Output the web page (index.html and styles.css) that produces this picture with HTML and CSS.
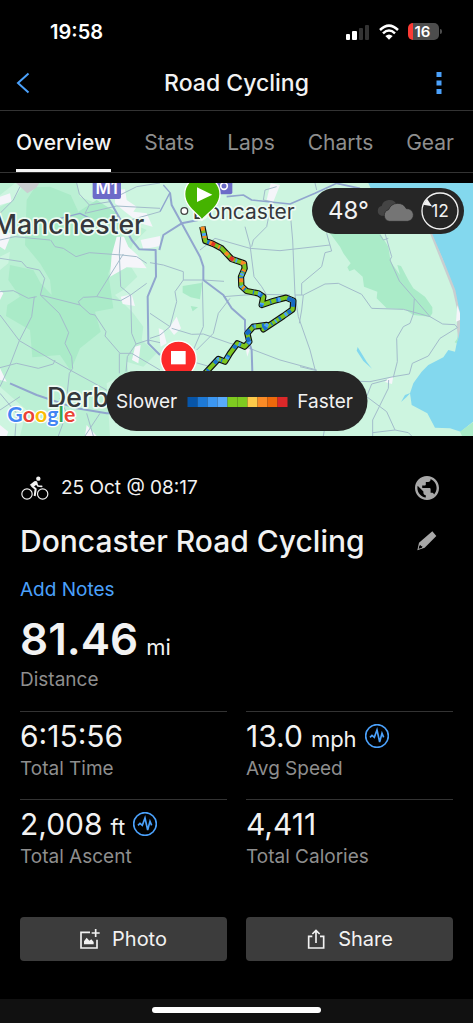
FILE: index.html
```html
<!DOCTYPE html>
<html lang="en">
<head>
<meta charset="utf-8">
<meta name="viewport" content="width=device-width, initial-scale=1">
<title>Road Cycling</title>
<link rel="stylesheet" href="styles.css">
</head>
<body>
<div class="app">
  <div class="status">
    <span class="clock">19:58</span>
    <div class="status-icons">
      <svg width="24" height="16" viewBox="0 0 24 16" aria-hidden="true">
        <rect x="0" y="10" width="4" height="6" rx="1" fill="#fff"/>
        <rect x="6" y="7" width="5" height="9" rx="1" fill="#fff"/>
        <rect x="13" y="4" width="4" height="12" rx="1" fill="#333"/>
        <rect x="19" y="1" width="4" height="15" rx="1" fill="#333"/>
      </svg>
      <svg width="20" height="16" viewBox="0 0 60 48" aria-hidden="true">
        <g fill="none" stroke="#fff" stroke-width="7.5">
          <path d="M3 18Q30 -8 57 18"/>
          <path d="M12 28Q30 11 48 28"/>
        </g>
        <path d="M19 36Q30 27 41 36L30 47Z" fill="#fff"/>
      </svg>
      <div class="battery"><span>16</span></div>
    </div>
  </div>

  <header class="nav">
    <button class="icon-button" aria-label="Back">
      <svg width="14" height="22" viewBox="0 0 14 22"><path d="M12.500 1.500 2 11l10.500 9.500" fill="none" stroke="#4ba1fb" stroke-width="2"/></svg>
    </button>
    <h1>Road Cycling</h1>
    <button class="icon-button more" aria-label="More">
      <svg width="6" height="24" viewBox="0 0 6 24" fill="#4ba1fb"><path d="M.5 1h5v5h-5zM.5 9.500h5v5h-5zM.5 18h5v5h-5z"/></svg>
    </button>
  </header>

  <nav class="tabs">
    <a href="#overview" class="active">Overview</a>
    <a href="#stats">Stats</a>
    <a href="#laps">Laps</a>
    <a href="#charts">Charts</a>
    <a href="#gear">Gear</a>
  </nav>

  <section class="map">
    <svg class="map-canvas" viewBox="0 9 1419 759" preserveAspectRatio="xMidYMid slice" role="img" aria-label="Route map">
      <rect y="9" width="1419" height="759" fill="#cdf5e0"/>
      <path fill="#bbf0d4" d="M0 9H230L240 50 300 75 350 110 440 150 400 190 380 240 412 290 370 330 345 345 400 400 430 440 425 480 470 520 430 560 380 545 385 575 320 610 330 768H0Z"/>
      <path fill="#aaebc8" d="M80 60 105 22 150 20 212 45 235 95 290 60 352 100 362 180 325 280 340 385 285 395 302 455 240 505 212 572 180 525 97 532 90 450 18 408 22 375 60 350 25 300 30 255 100 270 122 310 155 345 150 300 120 250 75 195Z"/>
      <path fill="#cdf5e0" d="M0 45 45 10H75L40 60 0 80ZM0 230 30 215 25 250 0 270ZM0 620 80 690 60 768H0Z"/>
      <g fill="#f5f5fa">
        <path d="M0 50 30 40 35 65 0 75ZM0 150 35 160 15 210 0 200ZM0 330 10 340 0 360ZM0 565 20 605 0 600ZM0 735 25 755 20 768H0Z"/>
        <path d="M345 30 375 28 380 60 410 80 400 95 440 100 458 140 420 130 375 95 345 70ZM350 170H372L385 200 412 225 440 265 380 262 330 290 335 225ZM422 180 480 168V198L430 208ZM362 350 395 343 405 378 368 372ZM405 500 422 495 415 550 396 540ZM260 735 290 768H255Z"/>
        <path d="M507 445 530 410 543 445 522 465ZM476 445 490 450 500 490 482 500ZM812 10 840 15 820 65 800 60ZM736 500 750 505 742 530ZM455 650 500 640 520 665ZM1162 598 1180 588 1176 612 1155 606Z"/>
      </g>
      <path fill="#c9ced0" d="M48 9H118L108 24 82 40Z"/>
      <path fill="#aaebc8" d="M548 318 607 308 600 358 572 352 548 338ZM572 378 594 382 578 394ZM990 160H1140L1165 200 1172 245 1200 285 1192 255 1203 258 1225 300 1240 325 1275 350 1297 382V400L1290 410 1240 405 1215 388 1160 385 1130 355 1132 335 1092 320 1088 290 1063 268 1048 274 1042 262 1052 250 1030 220 1020 200Z"/>
      <path fill="#83d8ee" d="M1105 9H1419V725L1382 755 1350 745 1305 743 1282 700 1235 675 1230 640 1240 610 1265 575 1285 555 1330 532 1345 510 1365 515 1372 480 1380 400 1360 325 1325 230 1290 155 1112 25ZM1073 501 1100 545 1116 566 1090 543 1070 512ZM1203 666 1215 645 1231 639 1219 652Z"/>
      <path fill="#c9ced0" d="M1288 155H1294L1330 240 1366 330 1380 400V450L1375 478 1370 440 1374 400 1358 330Z"/>
      <path fill="#f5f5fa" d="M1372 375 1380 400V420L1368 425Z"/>
      <path fill="#aaebc8" d="M1380 755 1419 727V768H1386ZM1364 487 1376 470 1370 490Z"/>
      <g fill="none" stroke="#a3bccb" stroke-width="3" stroke-linejoin="round">
        <path d="M0 235 65 245 80 262 118 270 134 295 121 345 240 375 270 402 285 405 318 455 315 468 360 520H395L480 570M0 335 40 332 85 355 110 350M121 345 178 400 206 458 195 490 215 530 218 565 208 580 200 655M103 350 95 410 58 482 28 560 0 620M0 405 58 482 165 545 210 570 320 630M0 563 50 550 115 565 160 552 165 540M370 222 290 350 250 352 235 365 240 375M290 350 362 362 392 345 440 310M392 345 395 460 408 492 382 530 378 575M408 492 445 480 480 488M358 520V580M152 180 165 200 190 205 228 230 268 218 365 225 410 230 440 250M362 170 358 220 362 320 392 345M0 180 45 170 150 180M230 9 238 42 268 75 255 100 350 78 480 85M268 75 330 65M355 130 480 95M480 9 410 20 360 45M0 100 40 60 60 20M0 640 50 700 45 768M180 655 200 700 175 768M260 700 280 768M300 700 255 768M60 650 0 690"/>
        <path d="M450 248 490 255 550 275 550 300H610L672 304M550 300 525 335 530 365 510 440 480 465 450 475M607 304 610 440 580 510M510 440 450 400M515 445 575 463 610 462 690 490 735 500 840 540 950 570M670 350 735 345 790 343 870 345M690 355 655 400 640 460 590 510M735 140 750 195 762 290 785 320 800 345M600 210 645 175 750 205 840 212 990 195M870 90 878 180 885 345 895 410 930 510 945 568M815 65 790 60 795 30 830 20M815 65 800 140 760 180 755 200M885 345 910 345 975 312 1015 310 1085 343 1115 385 1210 388 1290 410 1328 432 1365 434 1372 443M910 345 905 390 898 430M905 310 965 260 975 218 995 213 980 160M905 310V345M1140 165 1150 180 1165 175M1155 160 1175 230 1170 240 1198 303 1243 355 1290 410M1243 355 1240 402 1230 430 1210 440 1190 475 1192 545 1180 592M1372 443 1320 475 1285 528 1237 550 1228 582 1180 590 1110 605 1050 603M1166 600 1165 625 1118 720V768M1100 650 1160 695 1185 750 1225 758 1235 768M1185 750 1118 758M1100 650 1115 612 1160 600M945 9 950 30M900 560 950 572M970 768 975 740M535 575 560 540 630 560"/>
      </g>
      <g fill="none" stroke="#91a6ce" stroke-linejoin="round">
        <path stroke-width="6" d="M325 55 365 125 395 180 418 208 467 210 468 290 443 350 445 490 480 525M30 610 110 645 230 685 320 700 350 700M510 38 515 75 545 130 600 230 610 260V300L670 345 695 385 735 420V450L755 510 757 575M478 210 490 165 545 130 595 120"/>
        <path stroke-width="5" d="M680 50 730 45 755 60 870 72 945 40 1010 10M1010 10 1080 25"/>
        <path stroke-width="4" d="M180 115 240 100 270 115M480 95 510 38 490 15"/>
      </g>
      <rect x="278" y="-10" width="85" height="67" rx="6" fill="#6c6bc8"/>
      <text class="road-label" x="320" y="42" text-anchor="middle">M1</text>
      <rect x="640" y="-20" width="57" height="63" rx="6" fill="#6c6bc8"/>
      <circle cx="672" cy="18" r="10" fill="none" stroke="#fff" stroke-width="5"/>
      <text class="place" x="-22" y="163">Manchester</text>
      <text class="place" x="141" y="680">Derby</text>
      <text class="place small" x="578" y="116">Doncaster</text>
      <circle cx="553" cy="93" r="10" fill="#fff" stroke="#444" stroke-width="4"/>
      <g class="route" transform="translate(450 0)">
        <path class="route-edge" d="M157 140 166 183 190 192 215 205 245 237 282 250 284 265 273 290 274 318 290 333 325 340 340 350 335 375 370 363 408 353 430 362 428 388 400 408 340 448 350 435 310 440 292 460 298 485 284 500 262 490 240 520 225 545 205 537 165 580"/>
        <path class="route-green" d="M157 140 166 183 190 192 215 205 245 237 282 250 284 265 273 290 274 318 290 333 325 340 340 350 335 375 370 363 408 353 430 362 428 388 400 408 340 448 350 435 310 440 292 460 298 485 284 500 262 490 240 520 225 545 205 537 165 580"/>
        <path class="route-blue" d="M157 140 166 183 190 192 215 205 245 237 282 250 284 265 273 290 274 318 290 333 325 340 340 350 335 375 370 363 408 353 430 362 428 388 400 408 340 448 350 435 310 440 292 460 298 485 284 500 262 490 240 520 225 545 205 537 165 580"/>
        <path class="route-sky" d="M157 140 166 183 190 192 215 205 245 237 282 250 284 265 273 290 274 318 290 333 325 340 340 350 335 375 370 363 408 353 430 362 428 388 400 408 340 448 350 435 310 440 292 460 298 485 284 500 262 490 240 520 225 545 205 537 165 580"/>
        <path stroke="#f98a22" stroke-dasharray="12 17 6 22" d="M157 140 166 183 190 192 215 205 245 237 282 250 284 265 273 290 274 318 290 333"/>
        <path stroke="#e33327" d="M185 190 195 195M240 232 250 240"/>
        <path stroke="#1769c5" d="M412 354 430 362 429 380M288 462 300 450M292 472 298 485"/>
      </g>
      <path fill="#45b300" stroke="#fff" stroke-width="4" d="M606 120C598 103 554 83 554 42A53 53 0 0 1 660 42C660 83 616 103 606 120Z"/>
      <path fill="#fff" d="M591 22 637 44 591 66Z"/>
      <path fill="#fd2929" stroke="#fff" stroke-width="4" d="M535 620C525 600 482 575 482 537A53 53 0 0 1 589 537C589 575 545 600 535 620Z"/>
      <rect x="513" y="513" width="44" height="40" fill="#fff"/>
      <text class="google" x="22" y="727"><tspan fill="#4285f4">G</tspan><tspan fill="#ea4335">o</tspan><tspan fill="#fbbc05">o</tspan><tspan fill="#4285f4">g</tspan><tspan fill="#34a853">l</tspan><tspan fill="#ea4335">e</tspan></text>
    </svg>
    <div class="weather">
      <span>48°</span>
      <svg width="38" height="22" viewBox="0 0 114 66" aria-hidden="true">
        <path fill="#444" d="M16 47A15 15 0 0 1 17 18 24 24 0 0 1 61 12L40 48Z"/>
        <path fill="#757575" stroke="#262626" stroke-width="2" d="M40 64A18 18 0 0 1 38 29 29 29 0 0 1 91 26 19 19 0 0 1 95 64Z"/>
      </svg>
      <svg class="wind" width="38" height="38" viewBox="0 0 114 114" aria-label="Wind 12">
        <circle cx="57" cy="57" r="54" fill="none" stroke="#f2f2f2" stroke-width="4"/>
        <path fill="#f2f2f2" d="M18 20 33 43 7 38Z"/>
        <text x="57" y="76">12</text>
      </svg>
    </div>
    <div class="legend">
      <span>Slower</span>
      <div class="scale"><i class="c1"></i><i class="c2"></i><i class="c3"></i><i class="c4"></i><i class="c5"></i><i class="c5"></i><i class="c6"></i><i class="c7"></i><i class="c8"></i><i class="c9"></i></div>
      <span>Faster</span>
    </div>
  </section>

  <main class="details">
    <div class="row date-row">
      <svg width="28" height="24" viewBox="64 44 84 72" aria-hidden="true">
        <g fill="none" stroke="#f2f2f2">
          <circle cx="82" cy="98" r="15.500" stroke-width="3.500"/>
          <circle cx="129" cy="98" r="15.500" stroke-width="3.500"/>
          <path stroke-width="6" stroke-linejoin="round" d="M96 73 108 83 105 104"/>
          <path stroke-width="5" stroke-linejoin="round" stroke-linecap="round" d="M109 66 115 74 126 75"/>
        </g>
        <path fill="#f2f2f2" d="M90 71 104 60Q110 57 113 62L114 67 101 77Z"/>
        <circle cx="116" cy="52" r="6.500" fill="#f2f2f2"/>
      </svg>
      <span class="date">25 Oct @ 08:17</span>
      <button class="icon-button end" aria-label="Privacy">
        <svg width="24" height="24" viewBox="2 2 20 20" fill="#a8a8a8"><path d="M12 2C6.480 2 2 6.480 2 12s4.480 10 10 10 10-4.480 10-10S17.520 2 12 2zm-1 17.930c-3.950-.49-7-3.850-7-7.930 0-.62.08-1.210.21-1.790L9 15v1c0 1.100.9 2 2 2v1.930zm6.900-2.540c-.26-.81-1-1.390-1.900-1.390h-1v-3c0-.55-.45-1-1-1H8v-2h2c.55 0 1-.45 1-1V7h2c1.100 0 2-.9 2-2v-.41c2.930 1.190 5 4.060 5 7.410 0 2.080-.8 3.970-2.100 5.390z"/></svg>
      </button>
    </div>
    <div class="row title-row">
      <h2>Doncaster Road Cycling</h2>
      <button class="icon-button end" aria-label="Edit">
        <svg width="24" height="24" viewBox="540 206 72 72"><path fill="#a8a8a8" fill-rule="evenodd" d="M547 270 552 247 592 213 604 227 569 262ZM553 256 551 265 561 262 562 257 558 258 557 254Z"/></svg>
      </button>
    </div>
    <a href="#notes" class="notes">Add Notes</a>

    <div class="distance">
      <div class="value big">81.46 <small>mi</small></div>
      <div class="label">Distance</div>
    </div>
    <div class="stats">
      <div class="stat"><div class="value">6:15:56</div><div class="label">Total Time</div></div>
      <div class="stat">
        <div class="value">13.0 <small>mph</small>
          <svg class="pulse" viewBox="0 0 72 72" aria-hidden="true"><circle cx="36" cy="36" r="34"/><path d="M15 40 21 34 28 40 36 18 44 54 51 28 56 40"/></svg>
        </div>
        <div class="label">Avg Speed</div>
      </div>
      <div class="stat">
        <div class="value">2,008 <small>ft</small>
          <svg class="pulse" viewBox="0 0 72 72" aria-hidden="true"><circle cx="36" cy="36" r="34"/><path d="M15 40 21 34 28 40 36 18 44 54 51 28 56 40"/></svg>
        </div>
        <div class="label">Total Ascent</div>
      </div>
      <div class="stat"><div class="value">4,411</div><div class="label">Total Calories</div></div>
    </div>
    <div class="actions">
      <button>
        <svg width="20" height="20" viewBox="0 0 60 60"><path d="M30 10H3V57H51V32M35 12H59M47 0V24" fill="none" stroke="#f2f2f2" stroke-width="5"/><path fill="#f2f2f2" d="M12 46V37L20 26 28 35 34 31 41 39V46Z"/></svg>
        Photo
      </button>
      <button>
        <svg width="20" height="20" viewBox="0 0 60 60"><path d="M19 22H8V57H53V22H42M30 42V5M19 15 30 4 41 15" fill="none" stroke="#f2f2f2" stroke-width="5"/></svg>
        Share
      </button>
    </div>
  </main>
  <footer class="home"><div class="home-bar"></div></footer>
</div>
</body>
</html>
```
FILE: styles.css
```css
* { box-sizing: border-box; }
body {
  margin: 0;
  background: #000;
  color: #f2f2f2;
  font-family: Inter, "Liberation Sans", sans-serif;
  font-size: 19px;
  line-height: 24px;
}
.app { display: flex; flex-direction: column; min-height: 100vh; }
button { font: inherit; color: inherit; border: 0; padding: 0; background: none; }
a { text-decoration: none; }
svg { display: block; flex: none; }

.status {
  display: flex;
  align-items: center;
  justify-content: space-between;
  height: 55px;
  padding: 8px 34px 0 50px;
}
.clock { font-size: 20px; font-weight: 600; color: #fff; }
.status-icons { display: flex; align-items: center; gap: 9px; }
.battery {
  position: relative;
  width: 31px;
  height: 17px;
  padding-right: 2px;
  border-radius: 5px;
  background: linear-gradient(90deg, #fb3b35 5px, #4d4d4d 5px);
  color: #fff;
  font-size: 15px;
  font-weight: 600;
  line-height: 17px;
  text-align: center;
}
.battery::after {
  content: "";
  position: absolute;
  left: 32px;
  top: 6px;
  width: 2px;
  height: 5px;
  border-radius: 0 2px 2px 0;
  background: #4d4d4d;
}

.nav {
  display: grid;
  grid-template-columns: 30px 1fr 24px;
  align-items: center;
  height: 56px;
  padding: 0 22px 0 16px;
  border-bottom: 1px solid #333;
}
.nav h1 { margin: 0; font-size: 23px; font-weight: 500; text-align: center; }
.more { justify-self: center; }

.tabs {
  display: flex;
  justify-content: space-between;
  height: 62px;
  padding: 0 19px 0 16px;
  border-bottom: 1px solid #333;
  font-size: 21px;
  line-height: 63px;
}
.tabs a { height: 61px; color: #8e8e8e; }
.tabs .active { color: #f5f5f5; font-weight: 500; border-bottom: 3px solid #f5f5f5; }

.map { position: relative; height: 253px; margin-top: 10px; overflow: hidden; }
.map-canvas { width: 100%; height: 100%; }
.place {
  font-size: 80px;
  font-weight: 500;
  fill: #35383c;
  stroke: #eefbf4;
  stroke-width: 10px;
  stroke-linejoin: round;
  paint-order: stroke;
}
.small { font-size: 63px; font-weight: 400; }
.road-label { font-size: 50px; font-weight: 600; fill: #fff; }
.google {
  font-family: Lato, sans-serif;
  font-size: 64px;
  font-weight: 700;
  stroke: #fff;
  stroke-width: 8px;
  stroke-linejoin: round;
  paint-order: stroke;
}
.route { fill: none; stroke-width: 12px; stroke-linejoin: round; }
.route-edge { stroke: #111; stroke-width: 19px; }
.route-green { stroke: #7cc51f; }
.route-blue { stroke: #1b72cf; stroke-dasharray: 7 24 4 15 12 25; }
.route-sky { stroke: #4ba1fb; stroke-dasharray: 0 20 8 30 5 33; }
.weather {
  position: absolute;
  top: 5px;
  right: 9px;
  display: flex;
  align-items: center;
  gap: 7px;
  height: 46px;
  padding: 0 5px 0 16px;
  border-radius: 23px;
  background: #262626;
  font-size: 24px;
}
.wind text { font-size: 52px; fill: #f2f2f2; text-anchor: middle; }
.legend {
  position: absolute;
  bottom: 5px;
  left: 50%;
  transform: translateX(-50%);
  display: flex;
  align-items: center;
  gap: 10px;
  height: 60px;
  padding: 1px 14px 0 10px;
  border-radius: 30px;
  background: #262626;
}
.scale { display: flex; }
.scale i { width: 10px; height: 10px; }
.c1 { background: #0755a8; }
.c2 { background: #1d79d6; }
.c3 { background: #3c97f2; }
.c4 { background: #58aafc; }
.c5 { background: #7eca20; }
.c6 { background: #fdca4a; }
.c7 { background: #fa8b26; }
.c8 { background: #ee690b; }
.c9 { background: #dc2829; }

.details { padding: 36px 20px 38px; }
.row { display: flex; align-items: center; }
.end { margin-left: auto; padding: 0 14px; }
.date-row { height: 32px; gap: 12px; padding-left: 1px; }
.title-row { height: 40px; margin-top: 17px; }
.title-row h2 { margin: 0; font-size: 30px; line-height: 40px; font-weight: 550; }
.notes { display: block; width: max-content; margin-top: 17px; color: #4ba1fb; }
.distance { padding: 13px 0 19px; }
.value { display: flex; align-items: baseline; gap: 8px; font-size: 30px; line-height: 32px; height: 32px; }
.value small { font-size: 22px; }
.big { font-size: 44px; font-weight: 600; line-height: 48px; height: 48px; }
.big small { font-weight: 400; }
.label { margin-top: 5px; color: #8e8e8e; }
.stats { display: grid; grid-template-columns: 1fr 1fr; column-gap: 19px; }
.stat { padding: 8px 0 18px; border-top: 1px solid #333; }
.pulse { width: 24px; height: 24px; align-self: center; fill: none; stroke: #4ba1fb; stroke-width: 5px; }
.actions { display: grid; grid-template-columns: 1fr 1fr; gap: 19px; margin-top: 30px; }
.actions button {
  display: flex;
  align-items: center;
  justify-content: center;
  gap: 12px;
  height: 44px;
  border-radius: 4px;
  background: #3c3c3c;
  font-size: 20px;
}
.home {
  display: flex;
  justify-content: center;
  margin-top: auto;
  height: 24px;
  padding-top: 8px;
  background: #111;
}
.home-bar { width: 169px; height: 6px; border-radius: 3px; background: #fff; }
```
